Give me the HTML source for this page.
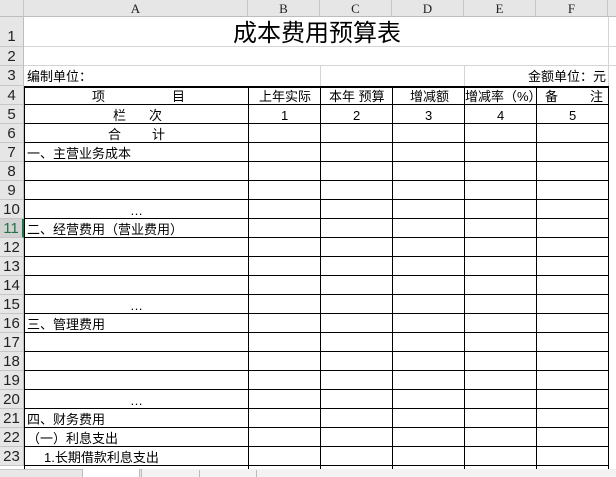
<!DOCTYPE html><html><head><meta charset="utf-8"><style>
body{margin:0;width:616px;height:477px;overflow:hidden;background:#fff;font-family:"Liberation Serif","Noto Sans CJK SC",serif;font-size:12px;position:relative}
div{position:absolute;box-sizing:border-box}
.ch{top:0;height:17px;background:#e6e6e6;border-right:1px solid #c6c6c6;border-bottom:1px solid #bdbdbd;text-align:center;line-height:17px;font-size:13px;color:#222}
.rh{left:0;width:24px;background:#e6e6e6;border-bottom:1px solid #c6c6c6;border-right:1px solid #bdbdbd;text-align:center;font-size:15px;color:#222;font-family:"Liberation Sans",sans-serif}
.t{font-family:"Liberation Sans","Noto Sans CJK SC",sans-serif;font-size:13px;white-space:pre;line-height:19px}
</style></head><body>
<div class="ch" style="left:0;width:24px"></div>
<div class="ch" style="left:24px;width:224px">A</div>
<div class="ch" style="left:248px;width:72px">B</div>
<div class="ch" style="left:320px;width:72px">C</div>
<div class="ch" style="left:392px;width:72px">D</div>
<div class="ch" style="left:464px;width:72px">E</div>
<div class="ch" style="left:536px;width:72px">F</div>
<div class="ch" style="left:608px;width:10px"></div>
<div class="rh" style="top:17px;height:30px;line-height:40px">1</div>
<div class="rh" style="top:47px;height:19px;line-height:19px">2</div>
<div class="rh" style="top:66px;height:20px;line-height:20px">3</div>
<div style="left:24px;top:46px;width:592px;height:1px;background:#d4d4d4"></div>
<div style="left:24px;top:65px;width:592px;height:1px;background:#d4d4d4"></div>
<div style="left:320px;top:66px;width:1px;height:20px;background:#d4d4d4"></div>
<div style="left:464px;top:66px;width:1px;height:20px;background:#d4d4d4"></div>
<div style="left:608px;top:17px;width:1px;height:70px;background:#d4d4d4"></div>
<div class="t" style="left:233px;top:19px;font-size:24px;line-height:30px">成本费用预算表</div>
<div class="t" style="left:27px;top:67px">编制单位：</div>
<div class="t" style="left:528px;top:67px">金额单位：元</div>
<div style="left:24px;top:86px;width:585px;height:2px;background:#000"></div>
<div id="rows"></div>
<script>
var h='';
for(var n=4;n<=23;n++){var y=86+(n-4)*19;
h+='<div class="rh" style="top:'+y+'px;height:19px;line-height:20px;'+(n==11?'color:#217346;background:#d2d2d2;border-right:2px solid #217346':'')+'">'+n+'</div>';
h+='<div style="left:24px;top:'+(y+18)+'px;width:585px;height:1px;background:#000"></div>';}
[24,248,320,392,464,536,608].forEach(function(x){h+='<div style="left:'+x+'px;top:86px;width:1px;height:384px;background:#000"></div>';});
document.getElementById('rows').innerHTML=h;
</script>
<div class="t" style="left:92px;top:87px">项</div><div class="t" style="left:172px;top:87px">目</div>
<div class="t" style="left:259px;top:87px">上年实际</div>
<div class="t" style="left:329px;top:87px">本年 预算</div>
<div class="t" style="left:410px;top:87px">增减额</div>
<div class="t" style="left:465px;top:87px">增减率（%）</div>
<div class="t" style="left:545px;top:87px">备</div><div class="t" style="left:590px;top:87px">注</div>
<div class="t" style="left:113px;top:106px">栏</div><div class="t" style="left:149px;top:106px">次</div>
<div class="t" style="left:281px;top:106px">1</div>
<div class="t" style="left:353px;top:106px">2</div>
<div class="t" style="left:425px;top:106px">3</div>
<div class="t" style="left:497px;top:106px">4</div>
<div class="t" style="left:569px;top:106px">5</div>
<div class="t" style="left:108px;top:125px">合</div><div class="t" style="left:152px;top:125px">计</div>
<div class="t" style="left:27px;top:144px">一、主营业务成本</div>
<div class="t" style="left:130px;top:201px">…</div>
<div class="t" style="left:27px;top:220px">二、经营费用（营业费用）</div>
<div class="t" style="left:130px;top:296px">…</div>
<div class="t" style="left:27px;top:315px">三、管理费用</div>
<div class="t" style="left:130px;top:391px">…</div>
<div class="t" style="left:27px;top:410px">四、财务费用</div>
<div class="t" style="left:27px;top:429px">（一）利息支出</div>
<div class="t" style="left:44px;top:448px">1.长期借款利息支出</div>
<div style="left:0;top:469px;width:616px;height:8px;background:#e8e8e8;border-top:1px solid #c6c6c6"></div>
<div style="left:82px;top:469px;width:58px;height:8px;background:#fff;border-left:1px solid #bbb;border-right:1px solid #bbb"></div>
<div style="left:141px;top:469px;width:475px;height:8px;background:#f3f3f3;border-left:1px solid #bbb"></div>
<div style="left:199px;top:470px;width:1px;height:7px;background:#bbb"></div>
<div style="left:256px;top:470px;width:1px;height:7px;background:#bbb"></div>
</body></html>
